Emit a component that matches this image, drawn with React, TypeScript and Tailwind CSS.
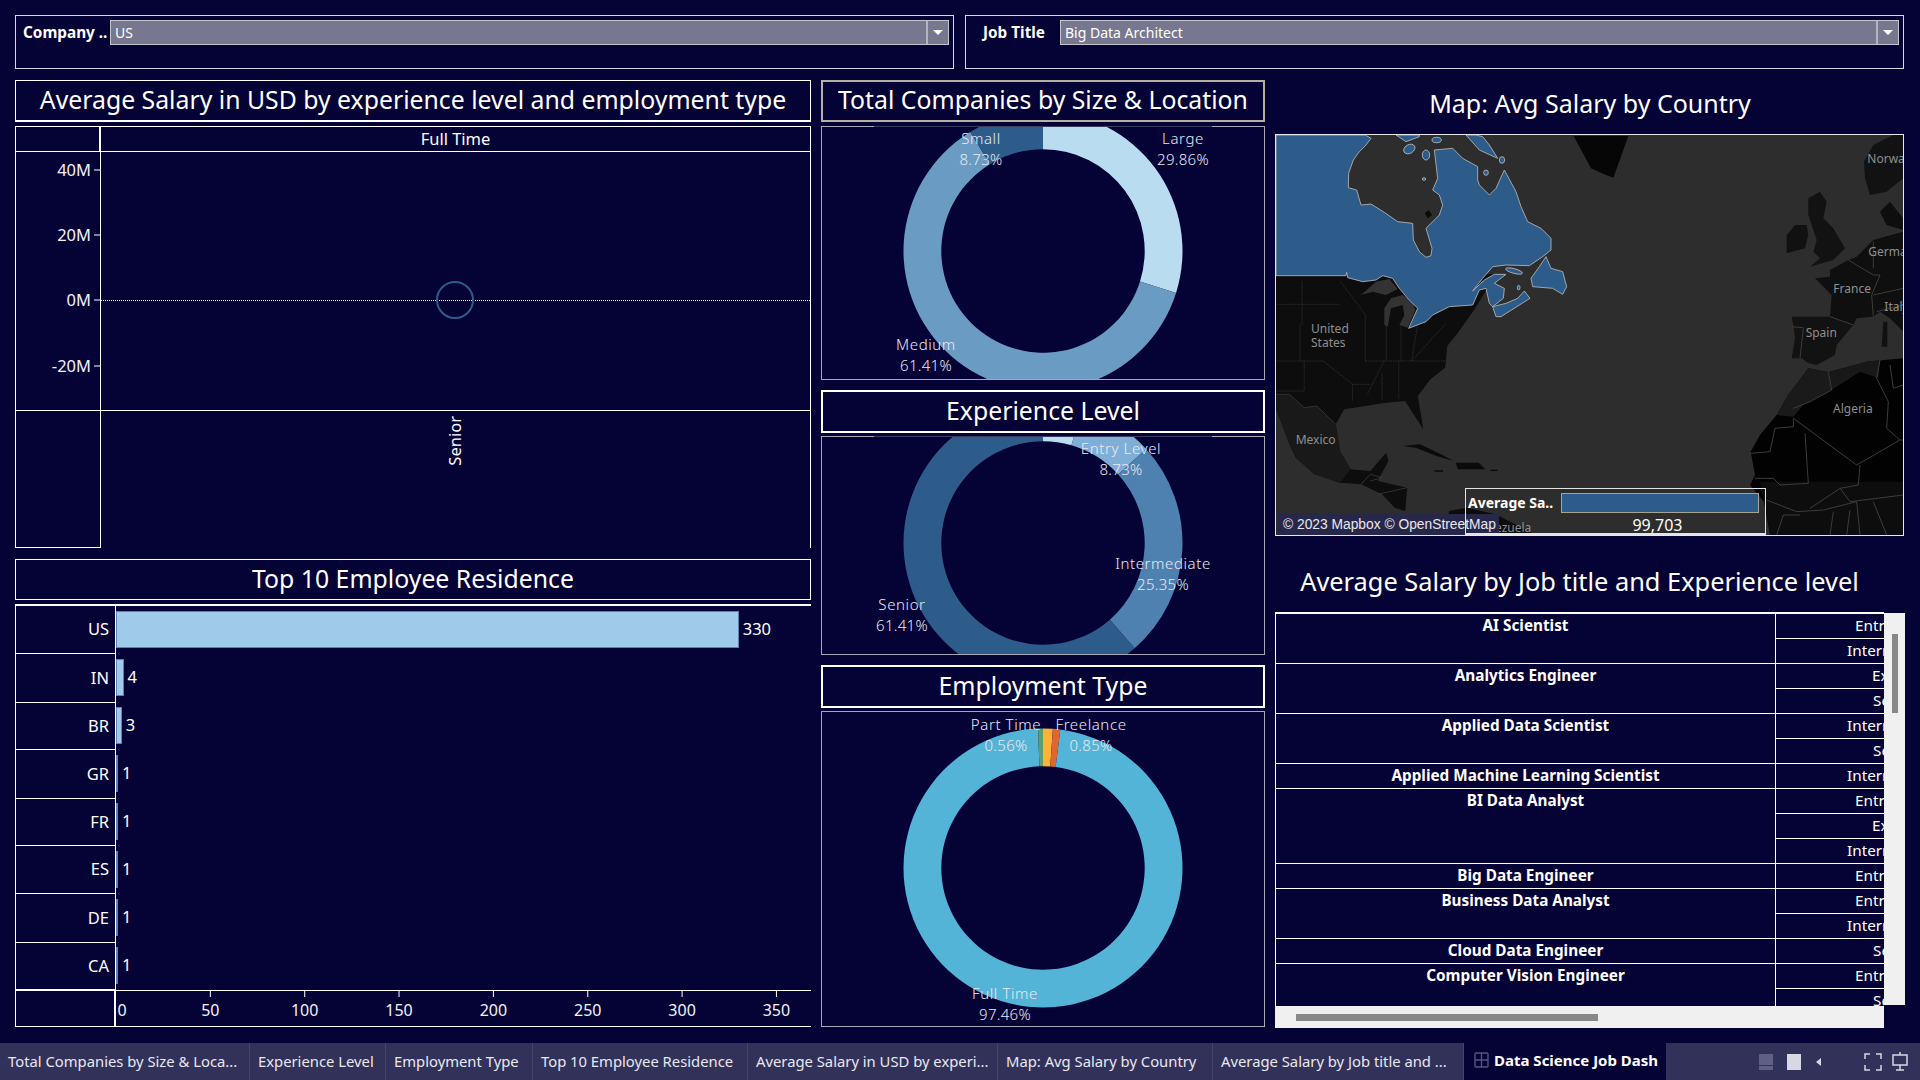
const polar = (r: number, pct: number, cx: number, cy: number) => {
  const a = (pct / 100) * 2 * Math.PI;
  return [cx + r * Math.sin(a), cy - r * Math.cos(a)];
};

function slicePath(from: number, to: number, cx: number, cy: number) {
  const R = 139.5;
  const r = 101.7;
  const large = to - from > 50 ? 1 : 0;
  const [x1, y1] = polar(R, from, cx, cy);
  const [x2, y2] = polar(R, to, cx, cy);
  const [x3, y3] = polar(r, to, cx, cy);
  const [x4, y4] = polar(r, from, cx, cy);
  return `M${x1} ${y1}A${R} ${R} 0 ${large} 1 ${x2} ${y2}L${x3} ${y3}A${r} ${r} 0 ${large} 0 ${x4} ${y4}Z`;
}

type Slice = { pct: number; color: string };
type Label = { name: string; value: string; x: number; y: number };

function TitleBox({ children, className }: { children: string; className: string }) {
  return (
    <div className={`flex items-center justify-center pb-[3px] text-[24.8px] leading-none text-white ${className}`}>
      {children}
    </div>
  );
}

function Donut({ cy, slices, labels, height, className, top = true }: { cy: number; slices: Slice[]; labels: Label[]; height: number; className: string; top?: boolean }) {
  let from = 0;
  return (
    <div className={`relative w-[444px] border border-[#a6a6b6] ${className}`}>
      <svg width={442} height={height} className="block">
        {slices.map((s) => {
          const d = slicePath(from, from + s.pct, 221, cy);
          from += s.pct;
          return <path key={s.color} d={d} fill={s.color} />;
        })}
        {labels.map((l) => (
          <g key={l.name} fill="#eaeaf2" fontSize="15" letterSpacing="0.6" textAnchor="middle" fontWeight="300">
            <text x={l.x} y={l.y + 5}>{l.name}</text>
            <text x={l.x} y={l.y + 26} letterSpacing="0.3">{l.value}</text>
          </g>
        ))}
      </svg>
      {top && <div className="absolute left-[52px] top-[-1px] h-px w-[338px] bg-[#3c3b60]" />}
    </div>
  );
}

function Filter({ label, value, labelClass, className }: { label: string; value: string; labelClass: string; className: string }) {
  return (
    <div className={`flex h-[54px] items-start border border-[#d8d8e0] pt-[4px] ${className}`}>
      <div className={`h-[25px] whitespace-nowrap text-[15.3px] font-bold leading-[25px] text-white ${labelClass}`}>{label}</div>
      <div className="flex h-[25px] flex-1 items-center border border-[#c4c4cc] bg-[#777790]">
        <span className="flex-1 pl-[4px] text-[14px] leading-none text-white">{value}</span>
        <div className="flex h-full w-[22px] items-center justify-center border-l-2 border-[#b4b4c0]">
          <div className="h-0 w-0 border-x-[5px] border-t-[5px] border-x-transparent border-t-white" />
        </div>
      </div>
    </div>
  );
}

function SalaryChart() {
  const ticks = [
    { t: '40M', y: 18 },
    { t: '20M', y: 83 },
    { t: '0M', y: 148 },
    { t: '-20M', y: 214 },
  ];
  return (
    <div className="mt-[4px] h-[422px] w-[796px] border-r border-l border-white">
      <div className="flex h-[26px] border-t border-b border-white">
        <div className="w-[85px] border-r-2 border-white" />
        <div className="flex-1 text-center text-[16.5px] leading-[24px] text-white">Full Time</div>
      </div>
      <div className="flex h-[259px] border-b border-white">
        <svg width={85} height={258} className="block border-r border-white">
          {ticks.map((k) => (
            <g key={k.t}>
              <text x={75} y={k.y + 6} fill="#f2f2f8" fontSize="16.5" textAnchor="end">{k.t}</text>
              <line x1={78} x2={84} y1={k.y} y2={k.y} stroke="#fff" />
            </g>
          ))}
        </svg>
        <svg width={709} height={258} className="block">
          <line x1={0} x2={709} y1={148.5} y2={148.5} stroke="#ffffff" strokeDasharray="1 1" />
          <circle cx={354} cy={148} r={18} fill="none" stroke="#2e5c8a" strokeWidth={2} />
        </svg>
      </div>
      <div className="flex h-[137px]">
        <div className="w-[85px] border-r border-b border-white" />
        <div className="flex flex-1 items-start justify-center pt-[5px]">
          <span className="rotate-180 text-[16.5px] leading-none text-white [writing-mode:vertical-rl]">Senior</span>
        </div>
      </div>
    </div>
  );
}

const residence = [
  { code: 'US', n: 330, h: 'h-[48px]' },
  { code: 'IN', n: 4, h: 'h-[49px]' },
  { code: 'BR', n: 3, h: 'h-[47px]' },
  { code: 'GR', n: 1, h: 'h-[49px]' },
  { code: 'FR', n: 1, h: 'h-[47px]' },
  { code: 'ES', n: 1, h: 'h-[48px]' },
  { code: 'DE', n: 1, h: 'h-[49px]' },
  { code: 'CA', n: 1, h: 'h-[47px]' },
];

function ResidenceChart() {
  return (
    <div className="mt-[4px] h-[423px] w-[796px] border-t-2 border-b border-l border-white">
      {residence.map((r) => (
        <div key={r.code} className={`flex ${r.h}`}>
          <div className="flex w-[100px] items-center justify-end border-r border-b border-white pr-[6px] text-[16.5px] text-white">{r.code}</div>
          <div className="flex flex-1 items-center pb-[2px]">
            <div className="h-[37px] border border-[#5d83a8] bg-[#9fcaea]" style={{ width: r.n * 1.887 }} />
            <span className="ml-[4px] text-[16.5px] text-white">{r.n}</span>
          </div>
        </div>
      ))}
      <div className="flex border-t border-white">
        <div className="h-[36px] w-[100px] border-r-2 border-white" />
        <svg width={695} height={36} className="block">
          {[0, 50, 100, 150, 200, 250, 300, 350].map((v) => (
            <g key={v}>
              {v > 0 && <line x1={v * 1.887} x2={v * 1.887} y1={0} y2={6} stroke="#fff" />}
              <text x={v === 0 ? 6 : v * 1.887} y={25} fill="#f2f2f8" fontSize="16" textAnchor="middle">{v}</text>
            </g>
          ))}
        </svg>
      </div>
    </div>
  );
}

function MapPanel() {
  return (
    <div className="relative h-[402px] w-[629px] overflow-hidden border border-[#e8e8e8] bg-[#2d2d2d]">
      <svg viewBox="0 0 1884 1206" width={628} height={402} className="block">
        {/* north america, traced at the wider crop scale */}
        <g transform="translate(-48 438) scale(1.2626 1)">
          <path d="M37 -20L560 -20L510 85L470 155L445 195L440 260L405 295L375 345L388 445L365 400L345 360L300 365L250 375L200 385L180 430L190 510L215 565L262 570L300 515L305 540L280 600L350 620L345 690L320 680L290 640L240 610L190 605L130 580L85 530L70 490L37 380Z" fill="#0d0d0d" />
          <path d="M37 340L70 340L105 380L135 375L180 430L190 510L215 565L190 605L130 580L85 530L70 490L37 380Z" fill="#191919" />
          <path d="M37 340L70 340L105 380L135 375L180 430M240 610L262 580L290 590L262 600M280 640L350 620" fill="none" stroke="#3c3c3c" strokeWidth="2" />
          <path d="M340 495L380 490L430 520L460 540L420 525L370 500ZM465 545L520 545L535 565L470 565ZM415 568L435 568L435 572L415 572ZM548 566L565 566L565 570L548 570Z" fill="#0a0a0a" />
          <path d="M430 765L450 690L490 680L560 700L660 765Z" fill="#0c0c0c" />
          <path d="M100 0V130M95 130V240M40 70H190M40 240H150M150 240L220 310V360M190 0L250 100M250 100V240M250 240L440 240M300 130V240M335 130V240M375 130L360 240M440 130L360 240M295 240L255 340M330 240V355M290 275V360M40 330H105M105 240V330M220 310H260" fill="none" stroke="#343434" strokeWidth="2" strokeDasharray="4 2" />
        </g>
        {/* great lakes */}
        <path d="M255 480L300 440L340 432L365 462L330 480L290 470Z M325 520L345 490L380 480L410 500L418 525L405 555L395 578L370 570L385 540L380 510L345 520L335 575L325 570Z" fill="#333" />
        {/* canada */}
        <g fill="#2e5c8a" stroke="#b9b9b9" strokeWidth="2.5" strokeLinejoin="round">
          <path d="M0 0L268 0L285 10L270 30L250 50L232 75L218 115L217 158L242 165L255 210L285 207L325 232L365 260L410 265L412 315L430 350L450 367L465 362L468 340L450 280L490 240L500 210L490 180L470 165L485 130L475 45L530 40L560 70L605 95L605 135L610 150L640 180L660 160L685 105L720 170L735 215L755 260L795 280L825 310L825 345L800 365L760 392L690 390L650 395L620 430L590 468L625 435L655 418L690 418L655 445L685 460L682 490L650 515L640 505L630 460L610 465L590 510L520 515L470 540L450 560L398 580L425 520L395 490L370 460L350 430L320 422L300 435L260 440L215 428L212 412L210 422L0 422Z" />
          <path d="M660 545L675 545L762 490L745 468L725 490L690 505L650 515Z" />
          <path d="M765 430L790 395L810 365L825 400L860 410L872 455L860 478L830 460L770 455Z" />
          <path d="M570 0L610 45L665 70L640 30L620 5L600 0Z" />
          <path d="M360 0L390 20L430 5L430 0Z" />
          <ellipse cx="400" cy="42" rx="18" ry="13" transform="rotate(-30 400 42)" />
          <ellipse cx="450" cy="60" rx="11" ry="15" />
          <ellipse cx="482" cy="15" rx="14" ry="8" />
          <ellipse cx="630" cy="113" rx="7" ry="8" />
          <ellipse cx="678" cy="75" rx="8" ry="10" />
          <ellipse cx="714" cy="408" rx="26" ry="7" transform="rotate(15 714 408)" />
          <ellipse cx="728" cy="458" rx="4" ry="7" />
          <ellipse cx="444" cy="132" rx="5" ry="4" />
        </g>
        <path d="M447 235L458 225L468 240L455 250Z" fill="#0a0a0a" />
        {/* greenland */}
        <path d="M893 3L1057 3L1012 128L990 120L945 100Z" fill="#060606" />
        <g transform="translate(1152 0)">
          {/* europe */}
          <path d="M640 30L700 0L730 0L730 130L680 170L630 180L615 130L612 80Z" fill="#121212" />
          <path d="M660 230L690 200L730 250L730 285L680 270Z" fill="#0e0e0e" />
          <path d="M445 190L480 170L500 200L490 250L520 280L555 340L520 375L450 395L480 370L460 350L470 315L445 240Z" fill="#121212" />
          <path d="M405 270L440 270L445 300L435 340L380 355L380 300Z" fill="#111111" />
          <path d="M465 430L510 425L510 405L565 375L590 365L640 315L730 290L730 590L690 550L660 530L640 545L590 550L580 570L510 545L515 480Z" fill="#0f0f0f" />
          <path d="M395 545L510 545L580 570L530 630L525 660L470 690L445 685L425 670L395 670L405 610L400 570Z" fill="#121212" />
          <path d="M670 560L682 560L682 635L665 635Z" fill="#111111" />
          {/* africa */}
          <path d="M445 700L505 712L620 680L730 670L730 1200L330 1200L320 1110L270 1050L285 1020L272 950L300 900L350 840L385 780Z" fill="#020202" />
          <path d="M445 700L505 712L515 765L430 810L400 845L350 840L385 780Z" fill="#1a1a1a" />
          <path d="M505 712L620 680L660 675L655 730L600 710L515 765Z" fill="#181818" />
          <path d="M300 1040L730 1040L730 1200L330 1200Z" fill="#0d0d0d" />
          <path d="M400 850L590 990L720 915L730 915M435 895L445 1045L360 1050L340 1030L285 1030M600 990L595 1050L540 1060L450 1120M345 880L400 875L400 850M345 880L330 950L272 955M400 820L450 800L515 765L505 712M660 675L650 730L685 800L680 880L720 915M690 690L700 760L730 750M540 1060L570 1100L730 1080M320 1095L410 1130L490 1125L590 1100M350 1200L370 1140L420 1140M520 1130L510 1200M590 1100L600 1200M570 1125L560 1200M680 1200L640 1100M510 545L580 570M430 580L420 670M395 575L430 578M565 375L640 420L660 420L635 480L640 545M640 480L730 460M650 530L730 510M640 400L640 320" fill="none" stroke="#3c3c3c" strokeWidth="3" />
          <g fill="#8f8f8f" fontSize="36">
            <text x="622" y="83">Norway</text>
            <text x="625" y="362">Germany</text>
            <text x="520" y="475">France</text>
            <text x="673" y="527">Italy</text>
            <text x="437" y="605">Spain</text>
            <text x="519" y="833">Algeria</text>
          </g>
        </g>
        <g fill="#8f8f8f" fontSize="36">
          <text x="105" y="595">United</text>
          <text x="105" y="637">States</text>
          <text x="59" y="928">Mexico</text>
          <text x="766" y="1190" textAnchor="end">Venezuela</text>
        </g>
      </svg>
      <div className="absolute bottom-0 left-[2px] flex h-[21px] w-[221px] items-center bg-[#27274a] pl-[5px] font-['Liberation_Sans',sans-serif] text-[13.8px] leading-none text-[#e8e8f0]">
        © 2023 Mapbox © OpenStreetMap
      </div>
      <div className="absolute bottom-0 left-[189px] h-[47px] w-[301px] border border-b-2 border-[#e4e4e4]">
        <div className="flex items-center pt-[4px] pl-[2px]">
          <span className="w-[93px] text-[14px] font-bold leading-[20px] text-white">Average Sa..</span>
          <div className="h-[20px] w-[198px] border border-[#a8a490] bg-[#2e5c8a]" />
        </div>
        <div className="pt-[3px] pl-[84px] text-center text-[16px] leading-[18px] text-white">99,703</div>
      </div>
    </div>
  );
}

const pad: Record<string, string> = {
  'Entry Level': 'pl-[79px]',
  Intermediate: 'pl-[71px]',
  Executive: 'pl-[96px]',
  Senior: 'pl-[97px]',
};

const jobs = [
  { title: 'AI Scientist', levels: ['Entry Level', 'Intermediate'] },
  { title: 'Analytics Engineer', levels: ['Executive', 'Senior'] },
  { title: 'Applied Data Scientist', levels: ['Intermediate', 'Senior'] },
  { title: 'Applied Machine Learning Scientist', levels: ['Intermediate'] },
  { title: 'BI Data Analyst', levels: ['Entry Level', 'Executive', 'Intermediate'] },
  { title: 'Big Data Engineer', levels: ['Entry Level'] },
  { title: 'Business Data Analyst', levels: ['Entry Level', 'Intermediate'] },
  { title: 'Cloud Data Engineer', levels: ['Senior'] },
  { title: 'Computer Vision Engineer', levels: ['Entry Level', 'Senior'] },
];

function JobTable() {
  return (
    <div>
      <div className="flex w-[630px]">
        <div className="h-[394px] w-[609px] overflow-hidden border-t-2 border-l border-white">
          {jobs.map((j) => (
            <div key={j.title} className="flex border-b border-white">
              <div className="w-[500px] border-r border-white text-center text-[15.3px] font-bold leading-[22px] text-white">{j.title}</div>
              <div className="flex-1 overflow-hidden">
                {j.levels.map((l, i) => {
                  const last = i === j.levels.length - 1;
                  return (
                    <div key={l} className={`whitespace-nowrap text-[15.3px] leading-[23px] text-white ${pad[l]} ${last ? 'h-[24px]' : 'h-[25px] border-b border-white'}`}>
                      {l}
                    </div>
                  );
                })}
              </div>
            </div>
          ))}
        </div>
        <div className="mt-px h-[392px] w-[21px] bg-[#f0f0f0] pt-[21px] pl-[8px]">
          <div className="h-[79px] w-[6px] bg-[#888888]" />
        </div>
      </div>
      <div className="h-[22px] w-[609px] bg-[#f0f0f0] pt-[8px] pl-[21px]">
        <div className="h-[7px] w-[302px] bg-[#888888]" />
      </div>
    </div>
  );
}

const tabs = [
  { t: 'Total Companies by Size & Loca...', w: 'w-[250px]' },
  { t: 'Experience Level', w: 'w-[136px]' },
  { t: 'Employment Type', w: 'w-[147px]' },
  { t: 'Top 10 Employee Residence', w: 'w-[215px]' },
  { t: 'Average Salary in USD by experi...', w: 'w-[250px]' },
  { t: 'Map: Avg Salary by Country', w: 'w-[215px]' },
  { t: 'Average Salary by Job title and ...', w: 'w-[251px]' },
];

function TabBar() {
  return (
    <div className="flex h-[37px] bg-[#32315a]">
      {tabs.map((t) => (
        <div key={t.t} className={`flex items-center overflow-hidden whitespace-nowrap border-r border-[#45446c] pl-[8px] text-[14.8px] text-[#e8e8f0] ${t.w}`}>
          {t.t}
        </div>
      ))}
      <div className="flex w-[202px] items-center bg-[#050236] pl-[10px] text-white">
        <svg width={15} height={16} viewBox="0 0 15 16" fill="none" stroke="#55557a" strokeWidth={1.4} className="mb-[3px]">
          <rect x={1} y={1} width={13} height={14} rx={1} />
          <path d="M7.5 1V15M1 8H14" />
        </svg>
        <span className="mb-[3px] ml-[5px] text-[15px] font-bold">Data Science Job Dash</span>
      </div>
      <div className="flex flex-1 items-center pl-[93px]">
        <div className="h-[16px] w-[14px] bg-[linear-gradient(#5f5f85_70%,#32315a_70%,#32315a_78%,#5f5f85_78%)]" />
        <div className="ml-[14px] h-[16px] w-[14px] bg-[#d8d8e4]" />
        <div className="ml-[15px] h-0 w-0 border-y-[4px] border-r-[5px] border-y-transparent border-r-[#d8d8e4]" />
        <svg width={18} height={18} viewBox="0 0 18 18" fill="none" stroke="#d8d8e4" strokeWidth={1.5} className="ml-[43px]">
          <path d="M1 6V1H6M12 1H17V6M17 12V17H12M6 17H1V12" />
        </svg>
        <svg width={16} height={20} viewBox="0 0 16 20" fill="none" stroke="#d8d8e4" strokeWidth={1.5} className="ml-[10px]">
          <path d="M8 0V3M1 3H15V13H1ZM8 13V18M4 18H12" />
        </svg>
      </div>
    </div>
  );
}

export default function App() {
  return (
    <div className="h-[1080px] w-[1920px] overflow-hidden bg-[#050236] font-['Noto_Sans',sans-serif]">
      <div className="flex h-[1043px] flex-col pt-[15px] pl-[15px]">
        <div className="flex gap-[11px]">
          <Filter label="Company .." value="US" labelClass="w-[94px] pl-[7px]" className="w-[939px] pr-[4px]" />
          <Filter label="Job Title" value="Big Data Architect" labelClass="w-[94px] pl-[17px]" className="w-[939px] pr-[4px]" />
        </div>
        <div className="mt-[11px] flex">
          <div className="w-[796px]">
            <TitleBox className="h-[42px] border border-b-2 border-white">Average Salary in USD by experience level and employment type</TitleBox>
            <SalaryChart />
            <TitleBox className="mt-[11px] h-[41px] border border-white">Top 10 Employee Residence</TitleBox>
            <ResidenceChart />
          </div>
          <div className="ml-[10px] w-[444px]">
            <TitleBox className="h-[42px] border-2 border-[#b5b0a0]">Total Companies by Size & Location</TitleBox>
            <Donut
              className="mt-[4px] h-[254px]"
              height={252}
              cy={124}
              slices={[
                { pct: 29.86, color: '#b9dcf1' },
                { pct: 61.41, color: '#6a9bc3' },
                { pct: 8.73, color: '#2e5c8a' },
              ]}
              labels={[
                { name: 'Small', value: '8.73%', x: 159, y: 12 },
                { name: 'Large', value: '29.86%', x: 361, y: 12 },
                { name: 'Medium', value: '61.41%', x: 104, y: 218 },
              ]}
            />
            <TitleBox className="mt-[10px] h-[43px] border-2 border-white">Experience Level</TitleBox>
            <Donut
              className="mt-[3px] h-[219px]"
              height={217}
              cy={106}
              slices={[
                { pct: 4.51, color: '#b9dcf1' },
                { pct: 8.73, color: '#7fafd6' },
                { pct: 25.35, color: '#4f81b0' },
                { pct: 61.41, color: '#2e5c8a' },
              ]}
              labels={[
                { name: 'Entry Level', value: '8.73%', x: 299, y: 12 },
                { name: 'Intermediate', value: '25.35%', x: 341, y: 127 },
                { name: 'Senior', value: '61.41%', x: 80, y: 168 },
              ]}
            />
            <TitleBox className="mt-[10px] h-[43px] border-2 border-white">Employment Type</TitleBox>
            <Donut
              className="mt-[3px] h-[316px]"
              height={314}
              cy={156}
              top={false}
              slices={[
                { pct: 1.13, color: '#fdb235' },
                { pct: 0.85, color: '#e0652f' },
                { pct: 97.46, color: '#53b4d8' },
                { pct: 0.56, color: '#5a9e72' },
              ]}
              labels={[
                { name: 'Part Time', value: '0.56%', x: 184, y: 13 },
                { name: 'Freelance', value: '0.85%', x: 269, y: 13 },
                { name: 'Full Time', value: '97.46%', x: 183, y: 282 },
              ]}
            />
          </div>
          <div className="ml-[10px] w-[630px]">
            <div className="flex h-[54px] items-center justify-center pb-[7px] text-[25px] leading-none text-white">Map: Avg Salary by Country</div>
            <MapPanel />
            <div className="flex h-[76px] w-[609px] items-center justify-center pt-[16px] text-[25.4px] leading-none text-white">
              Average Salary by Job title and Experience level
            </div>
            <JobTable />
          </div>
        </div>
      </div>
      <TabBar />
    </div>
  );
}
